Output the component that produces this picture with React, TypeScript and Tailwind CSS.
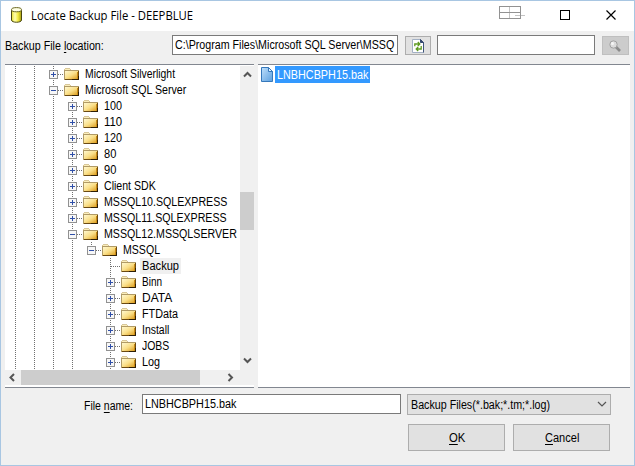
import { useLayoutEffect, useRef, useState, type ReactNode } from "react";

function Fit({ w, children }: { w: number; children: ReactNode }) {
  const ref = useRef<HTMLSpanElement>(null);
  const [scale, setScale] = useState(1);
  useLayoutEffect(() => {
    if (ref.current) setScale(w / ref.current.offsetWidth);
  }, [w]);
  return (
    <span className="block shrink-0 whitespace-nowrap" style={{ width: w }}>
      <span ref={ref} className="inline-block origin-left" style={{ transform: `scaleX(${scale})` }}>
        {children}
      </span>
    </span>
  );
}

const U = ({ children }: { children: ReactNode }) => (
  <span className="underline decoration-1 underline-offset-2">{children}</span>
);

type Node = { t: string; w: number; d: number; s: "+" | "-" | ""; sel?: boolean };
const nodes: Node[] = [
  { t: "Microsoft Silverlight", w: 90, d: 2, s: "+" },
  { t: "Microsoft SQL Server", w: 101, d: 2, s: "-" },
  { t: "100", w: 18, d: 3, s: "+" },
  { t: "110", w: 18, d: 3, s: "+" },
  { t: "120", w: 18, d: 3, s: "+" },
  { t: "80", w: 12, d: 3, s: "+" },
  { t: "90", w: 12, d: 3, s: "+" },
  { t: "Client SDK", w: 52, d: 3, s: "+" },
  { t: "MSSQL10.SQLEXPRESS", w: 123, d: 3, s: "+" },
  { t: "MSSQL11.SQLEXPRESS", w: 123, d: 3, s: "+" },
  { t: "MSSQL12.MSSQLSERVER", w: 133, d: 3, s: "-" },
  { t: "MSSQL", w: 37, d: 4, s: "-" },
  { t: "Backup", w: 37, d: 5, s: "", sel: true },
  { t: "Binn", w: 20, d: 5, s: "+" },
  { t: "DATA", w: 30, d: 5, s: "+" },
  { t: "FTData", w: 36, d: 5, s: "+" },
  { t: "Install", w: 27, d: 5, s: "+" },
  { t: "JOBS", w: 27, d: 5, s: "+" },
  { t: "Log", w: 18, d: 5, s: "+" },
];

function Folder() {
  return (
    <svg width="16" height="14" viewBox="0 0 16 14" className="ml-px shrink-0" shapeRendering="crispEdges">
      <path d="M1 1h5v1h1v1H0V2h1z" fill="#d8c79a" />
      <path d="M1 2h5v1H1z" fill="#fbeebb" />
      <path d="M0 3h15v10H0z" fill="#b09a66" />
      <path d="M1 4h13v8H1z" fill="url(#folder)" />
      <path d="M13 5h1v7h-1z" fill="#c98a14" />
      <path d="M14 4h1v9H1v-1h13z" fill="#6b4a12" />
      <path d="M14 9h1v4H8v-1h6z" fill="#2e1f06" />
    </svg>
  );
}

function Cell({ line, leaf, s }: { line: string; leaf: boolean; s: string }) {
  return (
    <svg width="19" height="16" viewBox="0 0 19 16" className="shrink-0 overflow-visible" shapeRendering="crispEdges">
      {line !== "none" && (
        <path d={line === "half" ? "M9.5 0v8" : "M9.5 0v16"} stroke="#707070" strokeDasharray="1 1" />
      )}
      {leaf && <path d="M10 8.5h10" stroke="#707070" strokeDasharray="1 1" />}
      {s && (
        <>
          <rect x="5.5" y="4.5" width="8" height="8" fill="#f7f7f7" stroke="#919191" />
          <path d="M7 8.5h5" stroke="#2f4fa8" />
          {s === "+" && <path d="M9.5 6v5" stroke="#2f4fa8" />}
        </>
      )}
    </svg>
  );
}

function Row({ n }: { n: Node }) {
  return (
    <div className="flex h-4 items-center pl-px">
      {Array.from({ length: n.d + 1 }, (_, i) => (
        <Cell
          key={i}
          leaf={i === n.d}
          s={i === n.d ? n.s : ""}
          line={i === 4 ? (n.d === 4 ? "half" : "none") : "full"}
        />
      ))}
      <Folder />
      <span className={`ml-[3px] flex h-4 items-center pl-[2px] pr-[2px] ${n.sel ? "bg-[#f0f0f0]" : ""}`}>
        <Fit w={n.w}>{n.t}</Fit>
      </span>
    </div>
  );
}

const Chevron = ({ d }: { d: string }) => (
  <svg width="9" height="9" viewBox="0 0 9 9" fill="none" stroke="#555" strokeWidth="2" className="shrink-0">
    <path d={d} />
  </svg>
);

export default function App() {
  return (
    <div className="flex h-[466px] w-[635px] flex-col overflow-hidden border border-[#a8c6e2] bg-[#f0f0f0] font-['Liberation_Sans',Arial,sans-serif] text-[12px] leading-4 text-black">
      <svg width="0" height="0" className="absolute">
        <defs>
          <linearGradient id="folder" x1="0" y1="0" x2="1" y2="1">
            <stop offset="0" stopColor="#fff8d0" />
            <stop offset=".5" stopColor="#fadf88" />
            <stop offset="1" stopColor="#dc9c1c" />
          </linearGradient>
          <linearGradient id="drum">
            <stop offset="0" stopColor="#e8e030" />
            <stop offset=".35" stopColor="#ffffb0" />
            <stop offset=".65" stopColor="#f4ec40" />
            <stop offset="1" stopColor="#a39a10" />
          </linearGradient>
          <linearGradient id="page" x1="0" y1="0" x2="1" y2="1">
            <stop offset="0" stopColor="#c0e0fb" />
            <stop offset="1" stopColor="#5b9fdf" />
          </linearGradient>
        </defs>
      </svg>
      <header className="flex h-[30px] shrink-0 items-center bg-white pl-[10px]">
        <svg width="12" height="16" viewBox="0 0 12 16" className="mb-[2px] shrink-0">
          <path d="M.5 3v10c0 3 10 3 10 0V3" fill="url(#drum)" stroke="#4a4810" />
          <ellipse cx="5.5" cy="2.7" rx="5" ry="2.1" fill="#ffffe4" stroke="#6a6720" />
        </svg>
        <span className="ml-[8px] font-['Open_Sans','Noto_Sans',sans-serif] text-[12px]">
          <Fit w={162}>Locate Backup File - DEEPBLUE</Fit>
        </span>
        <svg width="122" height="16" viewBox="0 0 122 16" fill="none" className="mb-[4px] ml-[306px] shrink-0" shapeRendering="crispEdges">
          <path d="M10.5 0v12M16 9.5h10" stroke="#c4c4c4" />
          <path d="M.5 .5h21v12H.5zM0 6.5h22" stroke="#929292" />
          <path d="M61.5 4.5h9v9h-9z" stroke="#000" />
          <path d="M107.5 4.5l9 9m0-9l-9 9" stroke="#000" shapeRendering="auto" strokeWidth="1.2" />
        </svg>
      </header>

      <div className="flex h-[33px] shrink-0 items-start pl-[4px] pt-[4px]">
        <div className="mt-[3px] w-[167px]">
          <Fit w={99}>Backup File <U>l</U>ocation:</Fit>
        </div>
        <div className="flex h-5 w-[226px] shrink-0 overflow-hidden border border-[#7a7a7a] bg-white pl-[2px] pt-px">
          <Fit w={219}>C:\Program Files\Microsoft SQL Server\MSSQ</Fit>
        </div>
        <button className="ml-[7px] mt-px flex h-[19px] w-[26px] shrink-0 items-center justify-center border border-[#adadad] bg-[#e1e1e1]">
          <svg width="12" height="14" viewBox="0 0 12 14">
            <path d="M.5 .5h8l3 3v10H.5z" fill="#fff" stroke="#a3b0c4" />
            <path d="M11.5 3.5v10" stroke="#3f5478" />
            <path d="M8.5.5v3h3z" fill="#33486e" stroke="#33486e" />
            <path d="M2.8 7.2V5h4.4M5.8 3l2 2-2 2M9.2 7v3H4.8M6.2 8l-2 2 2 2" fill="none" stroke="#5d9a20" strokeWidth="1.3" />
          </svg>
        </button>
        <div className="ml-[6px] h-5 w-[158px] shrink-0 border border-[#7a7a7a] bg-white" />
        <button className="ml-[7px] mt-px flex h-[19px] w-[27px] shrink-0 items-center justify-center border border-[#bfbfbf] bg-[#cccccc]">
          <svg width="12" height="12" viewBox="0 0 12 12" className="mr-[2px]">
            <path d="M7 7l4 4" stroke="#8a8a8a" strokeWidth="2.6" />
            <circle cx="4.5" cy="4.5" r="3.7" fill="#dcdcdc" stroke="#a0a0a0" />
            <circle cx="3.5" cy="3.5" r="1.5" fill="#f6f6f6" />
          </svg>
        </button>
      </div>

      <main className="flex h-[324px] shrink-0 gap-[4px] pl-[4px]">
        <section className="flex w-[249px] shrink-0 flex-col border-y border-[#828790] bg-white pt-px">
          <div className="flex h-[304px] shrink-0">
            <div className="w-[235px] overflow-hidden">
              {nodes.map((n) => <Row key={n.t} n={n} />)}
            </div>
            <div className="flex w-[14px] shrink-0 flex-col items-center bg-[#f0f0f0] pt-[4px]">
              <Chevron d="M1 6.5l3.5-3.5L8 6.5" />
              <div className="mt-[113px] h-[38px] w-full shrink-0 bg-[#cdcdcd]" />
              <div className="mt-[126px]"><Chevron d="M1 2.5L4.5 6 8 2.5" /></div>
            </div>
          </div>
          <div className="flex h-[15px] shrink-0 items-center bg-[#f0f0f0] pl-[3px]">
            <Chevron d="M6 1L2.5 4.5 6 8" />
            <div className="ml-[4px] h-full w-[179px] bg-[#cdcdcd]" />
            <div className="ml-[26px]"><Chevron d="M2.5 1L6 4.5 2.5 8" /></div>
          </div>
        </section>
        <section className="w-[372px] shrink-0 border-y border-[#828790] bg-white pt-px">
          <div className="flex h-[17px] items-center pl-[3px]">
            <svg width="12" height="15" viewBox="0 0 12 15">
              <path d="M.5 .5h7l4 4v10H.5z" fill="url(#page)" stroke="#3678bb" />
              <path d="M7.5.5v4h4z" fill="#e2f2ff" stroke="#3678bb" />
            </svg>
            <div className="ml-[2px] flex h-[17px] w-[95px] items-center bg-[#3399ff] pl-[2px] text-white">
              <Fit w={91}>LNBHCBPH15.bak</Fit>
            </div>
          </div>
        </section>
      </main>

      <div className="flex h-[27px] shrink-0 items-start pt-[6px]">
        <div className="ml-[83px] mt-[4px] w-[58px]">
          <Fit w={49}>File <U>n</U>ame:</Fit>
        </div>
        <div className="flex h-5 w-[259px] shrink-0 border border-[#7a7a7a] bg-white pl-[2px] pt-px">
          <Fit w={91}>LNBHCBPH15.bak</Fit>
        </div>
        <div className="ml-[6px] flex h-[21px] w-[204px] shrink-0 items-center border border-[#adadad] bg-[#e1e1e1] pl-[3px]">
          <Fit w={139}>Backup Files(*.bak;*.tm;*.log)</Fit>
          <svg width="10" height="7" viewBox="0 0 10 7" fill="none" stroke="#555" className="ml-[47px]">
            <path d="M1 1l4 4 4-4" strokeWidth="1.2" />
          </svg>
        </div>
      </div>
      <div className="mt-[9px] flex gap-[8px] pl-[407px]">
        <button className="flex h-[27px] w-[97px] shrink-0 items-center justify-center border border-[#adadad] bg-[#e1e1e1]">
          <Fit w={16}><U>O</U>K</Fit>
        </button>
        <button className="flex h-[27px] w-[97px] shrink-0 items-center justify-center border border-[#adadad] bg-[#e1e1e1]">
          <Fit w={34}><U>C</U>ancel</Fit>
        </button>
      </div>
    </div>
  );
}
